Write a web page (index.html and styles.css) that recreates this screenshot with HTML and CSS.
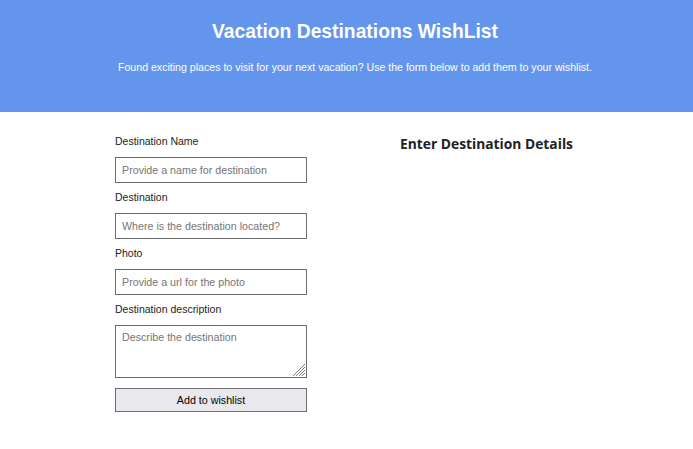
FILE: index.html
```html
<!DOCTYPE html>
<html>
<head>
<meta charset="utf-8">
<link rel="stylesheet" href="styles.css">
</head>
<body>
<header class="banner">
  <h1 class="title">Vacation Destinations WishList</h1>
  <p class="subtitle">Found exciting places to visit for your next vacation? Use the form below to add them to your wishlist.</p>
</header>
<main class="content">
  <form class="form">
    <label class="label" for="name">Destination Name</label>
    <input class="field" id="name" type="text" placeholder="Provide a name for destination">
    <label class="label" for="loc">Destination</label>
    <input class="field" id="loc" type="text" placeholder="Where is the destination located?">
    <label class="label" for="photo">Photo</label>
    <input class="field" id="photo" type="text" placeholder="Provide a url for the photo">
    <label class="label" for="desc">Destination description</label>
    <div class="area-wrap">
      <textarea class="field area" id="desc" placeholder="Describe the destination"></textarea>
      <svg class="grip" width="14" height="14" viewBox="0 0 14 14" aria-hidden="true">
        <g stroke="#7a7a7a" stroke-width="1">
          <line x1="13" y1="1" x2="1" y2="13"/>
          <line x1="13" y1="4" x2="4" y2="13"/>
          <line x1="13" y1="7" x2="7" y2="13"/>
          <line x1="13" y1="10" x2="10" y2="13"/>
        </g>
      </svg>
    </div>
    <button class="btn" type="button">Add to wishlist</button>
  </form>
  <section class="details">
    <h2 class="details-title">Enter Destination Details</h2>
  </section>
</main>
</body>
</html>
```
FILE: styles.css
```css
html, body { margin: 0; padding: 0; background: #fff; }
body { font-family: "Liberation Sans", Arial, sans-serif; color: #222; }
.banner {
  background: #6495ed;
  height: 112px;
  box-sizing: border-box;
  padding: 20px 0 0 17px;
  text-align: center;
  color: #fff;
}
.title { margin: 0; font-size: 19.3px; font-weight: bold; line-height: 24px; }
.subtitle { margin: 17px 0 0; font-size: 10.6px; line-height: 12px; }
.content { display: flex; padding-left: 115px; margin-top: 23px; }
.form { display: flex; flex-direction: column; width: 192px; }
.label { font-size: 10.5px; line-height: 12px; color: #222; margin-bottom: 10px; }
.field {
  box-sizing: border-box;
  width: 192px;
  height: 26px;
  border: 1px solid #6e6e6e;
  border-radius: 0;
  padding: 0 6px;
  font-family: "Liberation Sans", Arial, sans-serif;
  font-size: 10.7px;
  margin: 0 0 8px;
  outline: none;
}
.field::placeholder { color: #757575; }
.area-wrap { position: relative; width: 192px; height: 53px; margin-bottom: 10px; }
.area { display: block; height: 53px; padding: 5px 6px; resize: none; margin: 0; }
.grip { position: absolute; right: 1px; bottom: 1px; }
.btn {
  box-sizing: border-box;
  width: 192px;
  height: 24px;
  background: #e9e9ed;
  border: 1px solid #6e6e6e;
  border-radius: 0;
  font-family: "Liberation Sans", Arial, sans-serif;
  font-size: 10.7px;
  color: #000;
}
.details { margin-left: 93px; }
.details-title { margin: 0; font-family: "Open Sans", sans-serif; font-size: 13.8px; font-weight: 700; color: #222; line-height: 18px; }
```
